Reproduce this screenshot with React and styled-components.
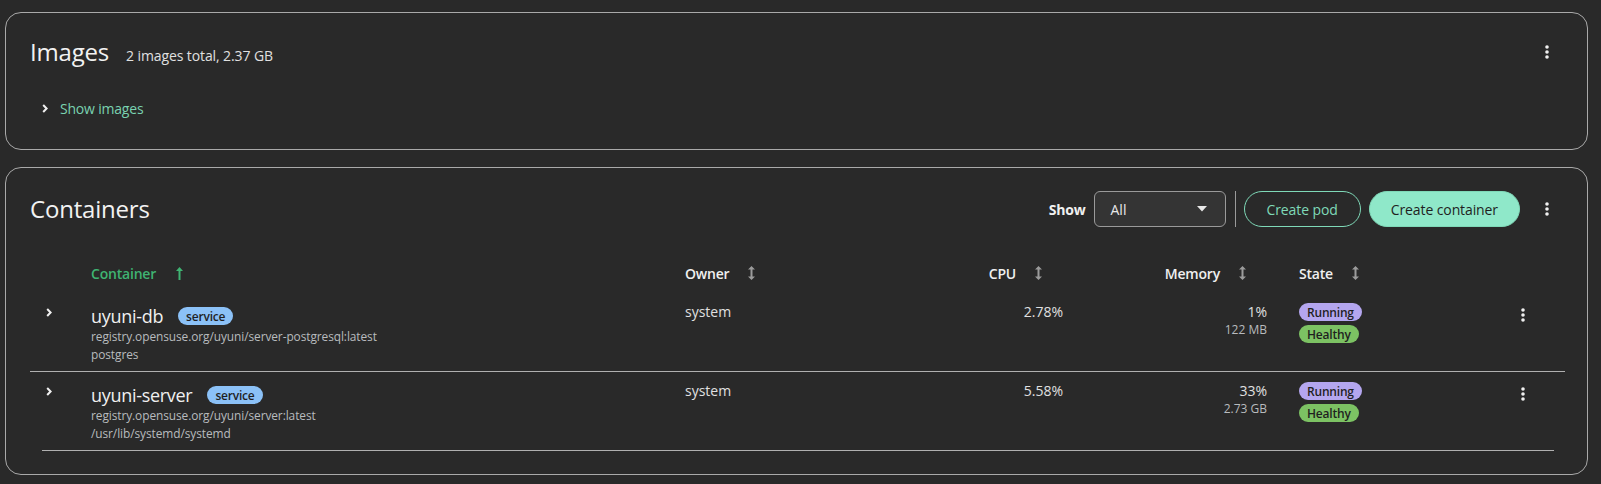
import React from "react";
import styled, { createGlobalStyle } from "styled-components";

const Global = createGlobalStyle`
  html, body { margin: 0; padding: 0; background: #292929; }
  body { font-family: "Open Sans", "Noto Sans", sans-serif; color: #e0e0e0; }
  * { box-sizing: border-box; }
`;

const Page = styled.div`
  display: flex;
  flex-direction: column;
  gap: 17px;
  padding: 12px 13px 10px 5px;
`;

const Card = styled.section`
  border: 1px solid #a9a9a9;
  border-radius: 16px;
  background: #292929;
  padding: ${(p) => p.$pad};
`;

const CardHeader = styled.div`
  display: flex;
  align-items: center;
  height: ${(p) => p.$h}px;
`;

const TitleGroup = styled.div`
  display: flex;
  align-items: baseline;
  flex: 1;
`;

const Title = styled.h2`
  margin: 0;
  font-size: 24px;
  font-weight: 400;
  line-height: 32px;
  color: #f2f2f2;
  letter-spacing: -0.2px;
`;

const Subtitle = styled.span`
  margin-left: 17px;
  font-size: 14px;
  color: #e0e0e0;
  letter-spacing: -0.1px;
`;

const KebabButton = styled.button`
  width: 32px;
  height: 32px;
  border: none;
  background: transparent;
  display: flex;
  align-items: center;
  justify-content: center;
  padding: 0;
  margin: ${(p) => p.$m || "0"};
  cursor: pointer;
`;

const Toggle = styled.div`
  display: flex;
  align-items: center;
  gap: 12px;
  height: 24px;
  margin-top: 28px;
  padding-left: 12px;
  font-size: 14px;
  letter-spacing: -0.2px;
  color: #79d2b0;
`;

const Toolbar = styled.div`
  display: flex;
  align-items: center;
`;

const ShowLabel = styled.span`
  font-size: 14px;
  font-weight: 700;
  color: #f0f0f0;
  margin-right: 8px;
  letter-spacing: -0.2px;
`;

const Select = styled.div`
  width: 132px;
  height: 36px;
  border: 1px solid #9a9a9a;
  border-radius: 6px;
  background: #343434;
  display: flex;
  align-items: center;
  justify-content: space-between;
  padding: 0 18px 0 16px;
  font-size: 14px;
  color: #e8e8e8;
`;

const Divider = styled.div`
  width: 1px;
  height: 36px;
  background: #9a9a9a;
  margin: 0 8px 0 9px;
`;

const Button = styled.button`
  height: 36px;
  border-radius: 999px;
  padding: 0 ${(p) => p.$px}px;
  font-family: inherit;
  font-size: 14px;
  letter-spacing: -0.1px;
  border: 1px solid #7fd9b8;
  background: ${(p) => (p.$primary ? "#8fe8c9" : "transparent")};
  color: ${(p) => (p.$primary ? "#1f1f1f" : "#7fd9b8")};
  margin-right: ${(p) => p.$mr || 0}px;
`;

const Table = styled.div`
  margin-top: 26px;
`;

const cols = "61px 594px 285px 109px 204px 1fr 75px";

const HeadRow = styled.div`
  display: grid;
  grid-template-columns: ${cols};
  height: 40px;
  align-items: center;
`;

const Th = styled.div`
  display: flex;
  align-items: center;
  justify-content: ${(p) => (p.$right ? "flex-end" : "flex-start")};
  padding: ${(p) => p.$pad || "0"};
  font-size: 14px;
  font-weight: 600;
  letter-spacing: -0.2px;
  color: ${(p) => (p.$active ? "#3fb372" : "#f0f0f0")};
`;

const SortIcon = styled.span`
  display: inline-flex;
  margin-left: ${(p) => p.$ml}px;
`;

const Row = styled.div`
  display: grid;
  grid-template-columns: ${cols};
  align-items: start;
  height: 79px;
  padding-bottom: 1px;
  background: linear-gradient(#b0b0b0, #b0b0b0) no-repeat;
  background-position: left ${(p) => p.$inL}px bottom 0;
  background-size: calc(100% - ${(p) => p.$inL + p.$inR}px) 1px;
`;

const Td = styled.div`
  padding: ${(p) => p.$pad || "0"};
  text-align: ${(p) => (p.$right ? "right" : "left")};
  font-size: 14px;
  line-height: 20px;
  color: #e0e0e0;
`;

const ChevronCell = styled.div`
  padding: 15px 0 0 16px;
  display: flex;
`;

const NameLine = styled.div`
  display: flex;
  align-items: center;
  height: 22px;
  margin-top: 12px;
`;

const Name = styled.span`
  font-size: 18px;
  line-height: 22px;
  color: #f0f0f0;
  letter-spacing: -0.3px;
  margin-right: 15px;
`;

const Sub = styled.div`
  font-size: 11.9px;
  line-height: 18px;
  letter-spacing: -0.08px;
  color: #b8bbbe;
`;

const SmallNum = styled.div`
  font-size: 12px;
  line-height: 16px;
  color: #b8bbbe;
`;

const Label = styled.span`
  display: inline-flex;
  align-items: center;
  height: 18px;
  padding: 0 8px;
  border-radius: 30px;
  font-size: 12px;
  font-weight: 600;
  letter-spacing: -0.2px;
  color: #1f1f1f;
  background: ${(p) => p.$bg};
`;

const LabelStack = styled.div`
  display: flex;
  flex-direction: column;
  align-items: flex-start;
  gap: 4px;
  padding: 10px 0 0 16px;
`;

const KebabCell = styled.div`
  padding: 6px 0 0 17px;
`;

const Kebab = () => (
  <svg width="4" height="14" viewBox="0 0 4 14">
    <circle cx="2" cy="2" r="1.8" fill="#f0f0f0" />
    <circle cx="2" cy="7" r="1.8" fill="#f0f0f0" />
    <circle cx="2" cy="12" r="1.8" fill="#f0f0f0" />
  </svg>
);

const Chevron = () => (
  <svg width="6" height="9" viewBox="0 0 6 9">
    <polyline points="1.2,1 4.6,4.5 1.2,8" fill="none" stroke="#f0f0f0" strokeWidth="2" />
  </svg>
);

const Caret = () => (
  <svg width="10" height="6" viewBox="0 0 10 6">
    <path d="M0 0 H10 L5 5.5 Z" fill="#e8e8e8" />
  </svg>
);

const SortBoth = () => (
  <svg width="7" height="14" viewBox="0 0 7 14">
    <path d="M3.5 0 L7 3.6 H4.5 V10.4 H7 L3.5 14 L0 10.4 H2.5 V3.6 H0 Z" fill="#9b9b9b" />
  </svg>
);

const SortUp = () => (
  <svg width="7" height="13" viewBox="0 0 7 13">
    <path d="M3.5 0 L7 4 H4.5 V13 H2.5 V4 H0 Z" fill="#3fb372" />
  </svg>
);

const containers = [
  {
    name: "uyuni-db",
    image: "registry.opensuse.org/uyuni/server-postgresql:latest",
    cmd: "postgres",
    owner: "system",
    cpu: "2.78%",
    mem: "1%",
    memAbs: "122 MB",
    inL: 0,
    inR: 0,
  },
  {
    name: "uyuni-server",
    image: "registry.opensuse.org/uyuni/server:latest",
    cmd: "/usr/lib/systemd/systemd",
    owner: "system",
    cpu: "5.58%",
    mem: "33%",
    memAbs: "2.73 GB",
    inL: 12,
    inR: 11,
  },
];

export default function App() {
  return (
    <>
      <Global />
      <Page>
        <Card $pad="23px 22px 29px 24px">
          <CardHeader $h={32}>
            <TitleGroup>
              <Title>Images</Title>
              <Subtitle>2 images total, 2.37 GB</Subtitle>
            </TitleGroup>
            <KebabButton $m="0 2px 0 0">
              <Kebab />
            </KebabButton>
          </CardHeader>
          <Toggle>
            <Chevron />
            <span>Show images</span>
          </Toggle>
        </Card>

        <Card $pad="23px 22px 23px 24px">
          <CardHeader $h={36}>
            <TitleGroup>
              <Title>Containers</Title>
            </TitleGroup>
            <Toolbar>
              <ShowLabel>Show</ShowLabel>
              <Select>
                <span>All</span>
                <Caret />
              </Select>
              <Divider />
              <Button $px={22} $mr={8}>
                Create pod
              </Button>
              <Button $px={21} $primary $mr={11}>
                Create container
              </Button>
              <KebabButton $m="0 2px 0 0">
                <Kebab />
              </KebabButton>
            </Toolbar>
          </CardHeader>

          <Table>
            <HeadRow>
              <div />
              <Th $active>
                Container
                <SortIcon $ml={20}>
                  <SortUp />
                </SortIcon>
              </Th>
              <Th>
                Owner
                <SortIcon $ml={19}>
                  <SortBoth />
                </SortIcon>
              </Th>
              <Th $right $pad="0 37px 0 0">
                CPU
                <SortIcon $ml={19}>
                  <SortBoth />
                </SortIcon>
              </Th>
              <Th $right $pad="0 37px 0 0">
                Memory
                <SortIcon $ml={19}>
                  <SortBoth />
                </SortIcon>
              </Th>
              <Th $pad="0 0 0 16px">
                State
                <SortIcon $ml={19}>
                  <SortBoth />
                </SortIcon>
              </Th>
              <div />
            </HeadRow>

            {containers.map((c) => (
              <Row key={c.name} $inL={c.inL} $inR={c.inR}>
                <ChevronCell>
                  <Chevron />
                </ChevronCell>
                <div>
                  <NameLine>
                    <Name>{c.name}</Name>
                    <Label $bg="#8bc1f7">service</Label>
                  </NameLine>
                  <Sub>{c.image}</Sub>
                  <Sub>{c.cmd}</Sub>
                </div>
                <Td $pad="9px 0 0 0">{c.owner}</Td>
                <Td $right $pad="9px 16px 0 0">
                  {c.cpu}
                </Td>
                <Td $right $pad="9px 16px 0 0">
                  {c.mem}
                  <SmallNum>{c.memAbs}</SmallNum>
                </Td>
                <LabelStack>
                  <Label $bg="#b4a6ef">Running</Label>
                  <Label $bg="#7cc263">Healthy</Label>
                </LabelStack>
                <KebabCell>
                  <KebabButton>
                    <Kebab />
                  </KebabButton>
                </KebabCell>
              </Row>
            ))}
          </Table>
        </Card>
      </Page>
    </>
  );
}
